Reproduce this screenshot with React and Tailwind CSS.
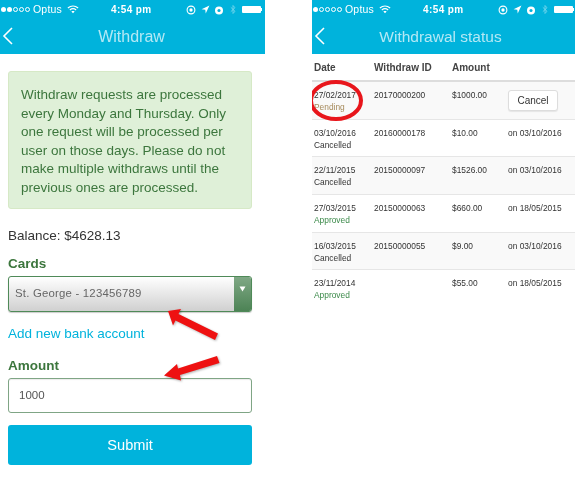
import React from "react";

function StatusBar({ dots }) {
  return (
    <div className="h-[19px] flex items-center relative text-white text-[10.5px] font-['Liberation_Sans',sans-serif] tracking-[0.2px]">
      <div className="flex items-center gap-[1px] pl-[1px]">
        {[0, 1, 2, 3, 4].map((i) => (
          <span key={i} className={i < dots ? "w-[5px] h-[5px] rounded-full bg-white" : "w-[5px] h-[5px] rounded-full border-[0.5px] border-white"} />
        ))}
      </div>
      <span className="ml-[3px]">Optus</span>
      <svg width="12" height="9" viewBox="0 0 11 8" className="ml-[5px]" fill="none" stroke="white" strokeWidth="1.1">
        <path d="M0.8 2.6C3.6 0.2 7.4 0.2 10.2 2.6" />
        <path d="M2.6 4.4C4.4 3 6.6 3 8.4 4.4" />
        <path d="M5.5 7.4L4 5.9C4.9 5.3 6.1 5.3 7 5.9Z" fill="white" stroke="none" />
      </svg>
      <span className="absolute left-[111px] font-bold text-[10px] tracking-[0.4px]">4:54 pm</span>
      <div className="absolute left-[186px] flex items-center">
        <svg width="10" height="10" viewBox="0 0 9 9" fill="none" stroke="white" strokeWidth="1">
          <circle cx="4.5" cy="4.5" r="3.5" />
          <circle cx="4.5" cy="4.5" r="1.5" fill="white" stroke="none" />
        </svg>
        <svg width="9" height="9" viewBox="0 0 8 8" className="ml-[5px]" fill="white">
          <path d="M7.5 0.5L0.5 3.8L3.8 4.2L4.2 7.5Z" />
        </svg>
        <svg width="10" height="10" viewBox="0 0 9 9" className="ml-[4px]" fill="white">
          <circle cx="4.5" cy="5" r="3.6" />
          <circle cx="4.5" cy="5" r="1.4" fill="#00b3dc" />
        </svg>
        <svg width="6" height="11" viewBox="0 0 6 10" className="ml-[6px] opacity-50" fill="none" stroke="white" strokeWidth="0.8">
          <path d="M0.8 2.8L5 6.8L3 9V1L5 3.2L0.8 7.2" />
        </svg>
        <div className="ml-[6px] w-[19px] h-[7px] bg-white rounded-[1px]" />
        <div className="w-[1px] h-[3px] bg-white" />
      </div>
    </div>
  );
}

function Header({ title, dots, titleClass }) {
  return (
    <div className="h-[54px] bg-[#00b3dc] relative shrink-0">
      <StatusBar dots={dots} />
      <div className="relative h-[35px] flex items-center justify-center">
        <svg width="12" height="18" viewBox="0 0 12 18" className="absolute left-[2px] top-[8px]" fill="none" stroke="white" strokeWidth="1.6">
          <path d="M10 1L2 9L10 17" />
        </svg>
        <span className={"text-white/70 font-['Liberation_Sans',sans-serif] font-normal " + titleClass}>{title}</span>
      </div>
    </div>
  );
}

const rows = [
  { d: "27/02/2017", s: "Pending", c: "text-[#a68a5b]", id: "20170000200", a: "$1000.00", cancel: true, bg: "bg-[#f9f9f9]", h: "h-[38px]" },
  { d: "03/10/2016", s: "Cancelled", c: "text-[#333333]", id: "20160000178", a: "$10.00", on: "on 03/10/2016", bg: "bg-white", h: "h-[37px]" },
  { d: "22/11/2015", s: "Cancelled", c: "text-[#333333]", id: "20150000097", a: "$1526.00", on: "on 03/10/2016", bg: "bg-[#f9f9f9]", h: "h-[38px]" },
  { d: "27/03/2015", s: "Approved", c: "text-[#3c8a4a]", id: "20150000063", a: "$660.00", on: "on 18/05/2015", bg: "bg-white", h: "h-[38px]" },
  { d: "16/03/2015", s: "Cancelled", c: "text-[#333333]", id: "20150000055", a: "$9.00", on: "on 03/10/2016", bg: "bg-[#f9f9f9]", h: "h-[37px]" },
  { d: "23/11/2014", s: "Approved", c: "text-[#3c8a4a]", id: "", a: "$55.00", on: "on 18/05/2015", bg: "bg-white", h: "h-[38px]" },
];

export default function App() {
  return (
    <div className="relative w-[575px] h-[478px] bg-white overflow-hidden flex font-['Liberation_Sans',sans-serif] blur-[0.35px]">
      <div className="w-[265px] shrink-0 flex flex-col">
        <Header title="Withdraw" dots={2} titleClass="-ml-[2px] text-[16px]" />
        <div className="px-[8px] pt-[17px]">
          <div className="h-[138px] w-[244px] bg-[#dff0d8] border border-[#d6e9c6] rounded-[3px] pl-[12px] pt-[14px] text-[13.5px] leading-[18.6px] text-[#3c763d]">
            Withdraw requests are processed<br />
            every Monday and Thursday. Only<br />
            one request will be processed per<br />
            user on those days. Please do not<br />
            make multiple withdraws until the<br />
            previous ones are processed.
          </div>
          <div className="mt-[18px] text-[13.5px] leading-[17px] text-[#333333]">Balance: $4628.13</div>
          <div className="mt-[11px] text-[13.5px] leading-[17px] font-bold text-[#3c763d]">Cards</div>
          <div className="mt-[4px] h-[36px] w-[244px] border border-[#4f8a58] rounded-[3px] flex overflow-hidden bg-gradient-to-b from-white to-[#d0d0d0] shadow-[0_1px_1px_rgba(0,0,0,0.2)]">
            <div className="flex-1 pl-[6px] flex items-center text-[11.4px] text-[#666666] tracking-[0.2px]">St. George - 123456789</div>
            <div className="w-[17px] bg-gradient-to-b from-[#7fa885] to-[#4c8355] flex justify-center pt-[9px]">
              <svg width="7" height="6" viewBox="0 0 7 6"><path d="M0.5 0.5H6.5L3.5 5.5Z" fill="white" /></svg>
            </div>
          </div>
          <div className="mt-[13px] text-[13.5px] leading-[17px] text-[#00b3dc]">Add new bank account</div>
          <div className="mt-[15px] text-[13.5px] leading-[17px] font-bold text-[#3c763d]">Amount</div>
          <div className="mt-[4px] h-[35px] w-[244px] border border-[#7fa585] rounded-[3px] bg-white flex items-center pl-[10px] text-[11.5px] text-[#555555] shadow-[inset_0_1px_1px_rgba(0,0,0,0.08)]">1000</div>
          <div className="mt-[12px] h-[40px] w-[244px] rounded-[3px] bg-[#00b3dc] flex items-center justify-center pt-[1px] text-white text-[14.6px]">Submit</div>
        </div>
      </div>

      <div className="w-[263px] ml-[47px] shrink-0 flex flex-col">
        <Header title="Withdrawal status" dots={1} titleClass="-ml-[6px] text-[15.5px]" />
        <table className="w-full table-fixed border-collapse text-[8.4px] text-[#333333] leading-[12px]">
          <colgroup>
            <col className="w-[62px]" />
            <col className="w-[78px]" />
            <col className="w-[56px]" />
            <col />
          </colgroup>
          <thead>
            <tr className="h-[27px] border-b-2 border-[#dddddd] text-[10px] text-[#444444]">
              <th className="pl-[2px] pt-[2px] text-left font-bold">Date</th>
              <th className="pt-[2px] text-left font-bold">Withdraw ID</th>
              <th className="pt-[2px] text-left font-bold">Amount</th>
              <th />
            </tr>
          </thead>
          <tbody>
            {rows.map((r) => (
              <tr key={r.d} className={r.bg + " " + r.h + " border-b border-[#e6e6e6] last:border-b-0 align-top"}>
                <td className="pl-[2px] pt-[7px]">
                  <div>{r.d}</div>
                  <div className={r.c}>{r.s}</div>
                </td>
                <td className="pt-[7px]">{r.id}</td>
                <td className="pt-[7px]">{r.a}</td>
                <td className="pt-[7px]">
                  {r.cancel ? (
                    <div className="mt-[1px] w-[50px] h-[21px] bg-white border border-[#dddddd] rounded-[3px] flex items-center justify-center text-[10px] shadow-[0_1px_1px_rgba(0,0,0,0.08)]">Cancel</div>
                  ) : (
                    r.on
                  )}
                </td>
              </tr>
            ))}
          </tbody>
        </table>
      </div>

      <svg width="575" height="478" viewBox="0 0 575 478" className="absolute left-0 top-0 pointer-events-none">
        <clipPath id="panel"><rect x="312" y="0" width="263" height="478" /></clipPath>
        <ellipse cx="336" cy="100.5" rx="25" ry="18.5" fill="none" stroke="#e8151b" strokeWidth="4" clipPath="url(#panel)" />
        <g style={{ filter: "drop-shadow(1px 1px 1px rgba(0,0,0,0.3))" }}>
          <path d="M168 311L181 309L178.5 314L218 333.5L215 340L175.5 320.5L173 325.5Z" fill="#ee1111" />
          <path d="M164 375.5L177 364L178 368.5L217 356L219.5 363L180 375L181 380.5Z" fill="#ee1111" />
        </g>
      </svg>
    </div>
  );
}
